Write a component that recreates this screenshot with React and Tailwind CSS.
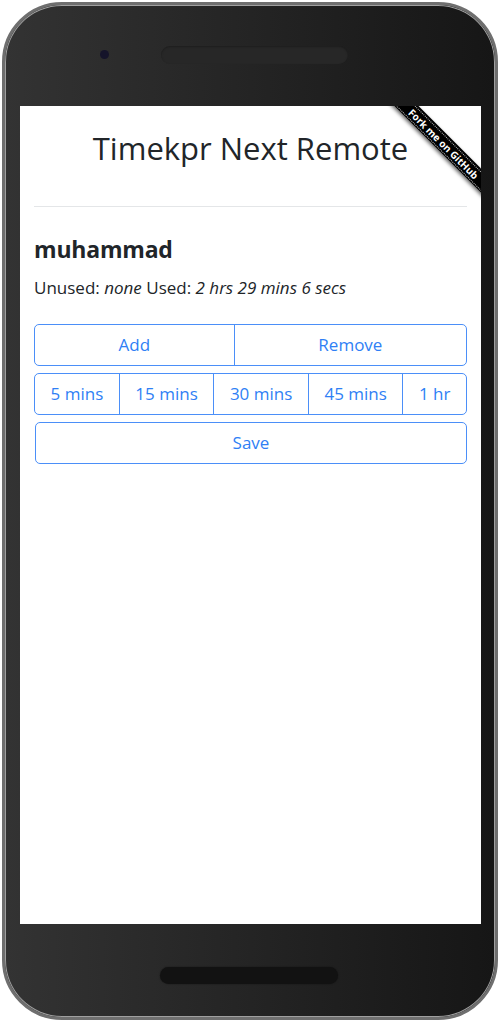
import React from "react";

const font = { fontFamily: '"Open Sans", "Noto Sans", "Liberation Sans", sans-serif' };

function Btn({ children, className = "" }) {
  return (
    <button
      className={
        "flex-auto h-full flex items-center justify-center text-[#2f7ff5] text-[17px] px-3 " +
        className
      }
    >
      {children}
    </button>
  );
}

export default function App() {
  return (
    <div className="w-[500px] h-[1024px] bg-white pt-[2px] pl-[2px]" style={font}>
      <div className="w-[496px] h-[1018px] rounded-[60px] border-[3px] border-[#6f6f6f] shadow-[inset_0_0_0_1px_#a0a0a0] bg-linear-to-r from-[#333333] to-[#161616] flex flex-col pl-[15px] pr-[13px]">
        {/* top bezel */}
        <div className="h-[101px] flex items-center pb-[2px]">
          <div className="ml-[80px] w-[9px] h-[9px] rounded-full bg-[#15142a]" />
          <div className="ml-[52px] w-[187px] h-[18px] rounded-full bg-[#272727] shadow-[inset_0_1px_2px_rgba(0,0,0,0.25)]" />
        </div>
        {/* screen */}
        <div className="w-[461px] h-[818px] bg-white relative overflow-hidden px-[14px]">
          {/* ribbon */}
          <div className="absolute right-[-43px] top-[29px] w-[160px] h-[17px] rotate-45 bg-black shadow-[0_2px_4px_rgba(0,0,0,0.6)] flex items-center justify-center">
            <div className="w-full h-[14px] border-y border-dotted border-[#bbbbbb] flex items-center justify-center text-white text-[10px] font-bold leading-none">
              Fork me on GitHub
            </div>
          </div>

          <h1 className="pt-[23px] text-center text-[31px] leading-[38px] text-[#212529]">
            Timekpr Next Remote
          </h1>
          <hr className="mt-[39px] border-t border-[#e4e6e8]" />
          <h2 className="mt-[27px] text-[23px] leading-[30px] font-bold text-[#212529] tracking-[-0.2px]">
            muhammad
          </h2>
          <p className="mt-[12px] text-[17px] leading-[24px] text-[#212529]">
            Unused: <em>none</em> Used: <em>2 hrs 29 mins 6 secs</em>
          </p>

          <div className="mt-[24px] flex flex-col gap-[7px]">
            <div className="h-[42px] flex border border-[#4b8ff8] rounded-[5px] divide-x divide-[#4b8ff8]">
              <Btn>Add</Btn>
              <Btn>Remove</Btn>
            </div>
            <div className="h-[42px] flex border border-[#4b8ff8] rounded-[5px] divide-x divide-[#4b8ff8]">
              <Btn>5 mins</Btn>
              <Btn>15 mins</Btn>
              <Btn>30 mins</Btn>
              <Btn>45 mins</Btn>
              <Btn>1 hr</Btn>
            </div>
            <div className="h-[42px] flex border border-[#4b8ff8] rounded-[5px] ml-[1px]">
              <Btn>Save</Btn>
            </div>
          </div>
        </div>
        {/* bottom bezel */}
        <div className="flex-1 flex justify-center pt-[43px] pr-[4px]">
          <div className="w-[178px] h-[17px] rounded-full bg-[#121212] shadow-[0_0_2px_rgba(0,0,0,0.4)]" />
        </div>
      </div>
    </div>
  );
}
